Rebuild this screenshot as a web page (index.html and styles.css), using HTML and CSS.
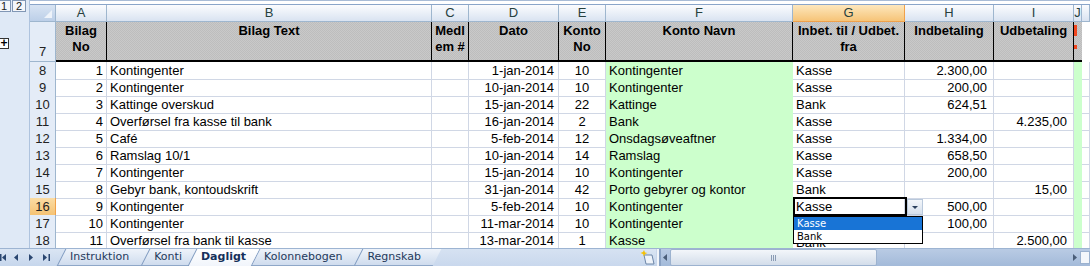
FILE: index.html
```html
<!DOCTYPE html>
<html lang="da">
<head>
    <meta charset="UTF-8">
    <title>Regnskab - Dagligt</title>
    <link rel="stylesheet" href="styles.css">
</head>
<body>
<div class="window">
    <div class="work">
        <div class="outline">
            <div class="levels"><span>1</span><span>2</span></div>
            <div class="expand">+</div>
        </div>

        <div class="sheet">
            <div class="edge"></div>

            <div class="r colhead">
                <div class="corner"></div>
                <div class="ch">A</div>
                <div class="ch">B</div>
                <div class="ch">C</div>
                <div class="ch">D</div>
                <div class="ch">E</div>
                <div class="ch">F</div>
                <div class="ch on">G</div>
                <div class="ch">H</div>
                <div class="ch">I</div>
                <div class="ch">J</div>
                <div class="ch"></div>
            </div>

            <div class="r headrow">
                <div class="rh tall">7</div>
                <div class="h">Bilag No</div>
                <div class="h">Bilag Text</div>
                <div class="h">Medl<br>em #</div>
                <div class="h">Dato</div>
                <div class="h">Konto No</div>
                <div class="h">Konto Navn</div>
                <div class="h">Inbet. til / Udbet. fra</div>
                <div class="h">Indbetaling</div>
                <div class="h">Udbetaling</div>
                <div class="h j"><span class="mark"></span><span class="dot"></span></div>
                <div class="h blank"></div>
            </div>

            <div class="r">
                <div class="rh">8</div>
                <div class="c num">1</div>
                <div class="c">Kontingenter</div>
                <div class="c"></div>
                <div class="c date">1-jan-2014</div>
                <div class="c ctr">10</div>
                <div class="c g">Kontingenter</div>
                <div class="c">Kasse</div>
                <div class="c amt">2.300,00</div>
                <div class="c amt"></div>
                <div class="c g"></div>
                <div class="c"></div>
            </div>
            <div class="r">
                <div class="rh">9</div>
                <div class="c num">2</div>
                <div class="c">Kontingenter</div>
                <div class="c"></div>
                <div class="c date">10-jan-2014</div>
                <div class="c ctr">10</div>
                <div class="c g">Kontingenter</div>
                <div class="c">Kasse</div>
                <div class="c amt">200,00</div>
                <div class="c amt"></div>
                <div class="c g"></div>
                <div class="c"></div>
            </div>
            <div class="r">
                <div class="rh">10</div>
                <div class="c num">3</div>
                <div class="c">Kattinge overskud</div>
                <div class="c"></div>
                <div class="c date">15-jan-2014</div>
                <div class="c ctr">22</div>
                <div class="c g">Kattinge</div>
                <div class="c">Bank</div>
                <div class="c amt">624,51</div>
                <div class="c amt"></div>
                <div class="c g"></div>
                <div class="c"></div>
            </div>
            <div class="r">
                <div class="rh">11</div>
                <div class="c num">4</div>
                <div class="c">Overførsel fra kasse til bank</div>
                <div class="c"></div>
                <div class="c date">16-jan-2014</div>
                <div class="c ctr">2</div>
                <div class="c g">Bank</div>
                <div class="c">Kasse</div>
                <div class="c amt"></div>
                <div class="c amt">4.235,00</div>
                <div class="c g"></div>
                <div class="c"></div>
            </div>
            <div class="r">
                <div class="rh">12</div>
                <div class="c num">5</div>
                <div class="c">Café</div>
                <div class="c"></div>
                <div class="c date">5-feb-2014</div>
                <div class="c ctr">12</div>
                <div class="c g">Onsdagsøveaftner</div>
                <div class="c">Kasse</div>
                <div class="c amt">1.334,00</div>
                <div class="c amt"></div>
                <div class="c g"></div>
                <div class="c"></div>
            </div>
            <div class="r">
                <div class="rh">13</div>
                <div class="c num">6</div>
                <div class="c">Ramslag 10/1</div>
                <div class="c"></div>
                <div class="c date">10-jan-2014</div>
                <div class="c ctr">14</div>
                <div class="c g">Ramslag</div>
                <div class="c">Kasse</div>
                <div class="c amt">658,50</div>
                <div class="c amt"></div>
                <div class="c g"></div>
                <div class="c"></div>
            </div>
            <div class="r">
                <div class="rh">14</div>
                <div class="c num">7</div>
                <div class="c">Kontingenter</div>
                <div class="c"></div>
                <div class="c date">15-jan-2014</div>
                <div class="c ctr">10</div>
                <div class="c g">Kontingenter</div>
                <div class="c">Kasse</div>
                <div class="c amt">200,00</div>
                <div class="c amt"></div>
                <div class="c g"></div>
                <div class="c"></div>
            </div>
            <div class="r">
                <div class="rh">15</div>
                <div class="c num">8</div>
                <div class="c">Gebyr bank, kontoudskrift</div>
                <div class="c"></div>
                <div class="c date">31-jan-2014</div>
                <div class="c ctr">42</div>
                <div class="c g">Porto gebyrer og kontor</div>
                <div class="c">Bank</div>
                <div class="c amt"></div>
                <div class="c amt">15,00</div>
                <div class="c g"></div>
                <div class="c"></div>
            </div>
            <div class="r">
                <div class="rh on">16</div>
                <div class="c num">9</div>
                <div class="c">Kontingenter</div>
                <div class="c"></div>
                <div class="c date">5-feb-2014</div>
                <div class="c ctr">10</div>
                <div class="c g">Kontingenter</div>
                <div class="c dd">Kasse
                    <div class="sel"></div>
                    <div class="ddbtn">
                        <svg width="16" height="16" viewBox="0 0 16 16"><path d="M5 7h6l-3 3z" fill="#2b3f5c"/></svg>
                    </div>
                    <div class="ddlist">
                        <div class="item hi">Kasse</div>
                        <div class="item">Bank</div>
                    </div>
                </div>
                <div class="c amt">500,00</div>
                <div class="c amt"></div>
                <div class="c g"></div>
                <div class="c"></div>
            </div>
            <div class="r">
                <div class="rh">17</div>
                <div class="c num">10</div>
                <div class="c">Kontingenter</div>
                <div class="c"></div>
                <div class="c date">11-mar-2014</div>
                <div class="c ctr">10</div>
                <div class="c g">Kontingenter</div>
                <div class="c"></div>
                <div class="c amt">100,00</div>
                <div class="c amt"></div>
                <div class="c g"></div>
                <div class="c"></div>
            </div>
            <div class="r">
                <div class="rh">18</div>
                <div class="c num">11</div>
                <div class="c">Overførsel fra bank til kasse</div>
                <div class="c"></div>
                <div class="c date">13-mar-2014</div>
                <div class="c ctr">1</div>
                <div class="c g">Kasse</div>
                <div class="c under">Bank</div>
                <div class="c amt"></div>
                <div class="c amt">2.500,00</div>
                <div class="c g"></div>
                <div class="c"></div>
            </div>
        </div>
    </div>

    <div class="tabbar">
        <div class="nav">
            <svg width="57" height="17" viewBox="0 0 57 17">
                <rect x="0" y="5" width="1.5" height="7" fill="#2a4670"/>
                <path d="M6 5L2 8.5L6 12z" fill="#2a4670"/>
                <path d="M18 5L14 8.5L18 12z" fill="#2a4670"/>
                <path d="M29 5L33 8.5L29 12z" fill="#2a4670"/>
                <path d="M43 5L47 8.5L43 12z" fill="#2a4670"/>
                <rect x="48.5" y="5" width="1.5" height="7" fill="#2a4670"/>
            </svg>
        </div>
        <div class="tabs">
            <span class="tab">Instruktion</span>
            <span class="tab">Konti</span>
            <span class="tab active">Dagligt</span>
            <span class="tab">Kolonnebogen</span>
            <span class="tab">Regnskab</span>
        </div>
        <div class="filler"></div>
        <div class="newsheet">
            <svg width="16" height="17" viewBox="0 0 16 17">
                <path d="M4 6h8l2 9H6z" fill="#eef3fa" stroke="#6d86a8"/>
                <path d="M4 1l1 2.5L7.5 4L5 5L4 7.5L3 5L0.5 4L3 3z" fill="#f5c000"/>
            </svg>
        </div>
        <div class="split"></div>
        <div class="hscroll">
            <div class="sbtn">
                <svg width="9" height="17" viewBox="0 0 9 17"><path d="M6 5L2 8.5L6 12z" fill="#4a5d78"/></svg>
            </div>
            <div class="thumb"><span class="grip"></span></div>
            <div class="track"></div>
            <div class="sbtn right">
                <svg width="12" height="17" viewBox="0 0 12 17"><path d="M5 5L9 8.5L5 12z" fill="#4a5d78"/></svg>
            </div>
            <div class="sizebox"></div>
        </div>
    </div>
</div>
</body>
</html>
```

FILE: styles.css
```css
body {
    margin: 0;
    font-family: "Liberation Sans", Arial, sans-serif;
    font-size: 13px;
    background-color: #fff;
    color: #000;
    overflow: hidden;
}
.window {
    width: 1090px;
    height: 266px;
    display: flex;
    flex-direction: column;
}
.work {
    display: flex;
    height: 248px;
    overflow: hidden;
}

/* outline (group) margin */
.outline {
    width: 30px;
    flex: none;
    background-color: #dfe9f6;
    border-right: 1px solid #aec3de;
    box-sizing: border-box;
}
.levels {
    display: flex;
    gap: 1px;
    margin-left: -3px;
}
.levels span {
    width: 12px;
    height: 10px;
    border: 1px solid #8197b5;
    background-color: #f4f6fa;
    font-size: 11px;
    line-height: 10px;
    text-align: center;
    color: #222;
}
.expand {
    width: 8px;
    height: 9px;
    margin-top: 26px;
    border: 1px solid #333;
    border-left: none;
    background-color: #fff;
    font-weight: bold;
    font-size: 12px;
    line-height: 9px;
    text-align: center;
}

.sheet {
    flex: 1;
    min-width: 0;
}
.edge {
    height: 5px;
    box-sizing: border-box;
    border-top: 1px solid #a9bcd6;
    border-bottom: 1px solid #8aa5c9;
}
.r {
    display: grid;
    grid-template-columns: 26px 51px 325px 37px 90px 47px 187px 112px 89px 80px 8px 1fr;
    height: 17px;
}
.r > div {
    box-sizing: border-box;
}

/* column letters */
.ch {
    background: linear-gradient(#fbfcfe, #d9e3f1);
    border-right: 1px solid #9eb6ce;
    border-bottom: 1px solid #9eb6ce;
    text-align: center;
    line-height: 16px;
    color: #27413e;
    overflow: hidden;
}
.ch.on {
    background: linear-gradient(#fde7bd, #f6c478);
    border-color: #f0a14a;
}
.corner {
    position: relative;
    background: linear-gradient(#d8e4f3, #bccfe8);
    border-right: 1px solid #9eb6ce;
    border-bottom: 1px solid #9eb6ce;
}
.corner::after {
    content: "";
    position: absolute;
    right: 3px;
    bottom: 3px;
    border-left: 8px solid transparent;
    border-bottom: 8px solid #eef3fa;
}

/* row numbers */
.rh {
    background-color: #e4ecf7;
    border-right: 1px solid #9eb6ce;
    border-bottom: 1px solid #9eb6ce;
    text-align: center;
    line-height: 16px;
    padding-top: 1px;
    color: #222;
}
.rh.on {
    background: linear-gradient(#fbdca4, #f5c374);
    border-color: #f0a14a;
}
.rh.tall {
    display: flex;
    align-items: flex-end;
    justify-content: center;
    padding-bottom: 1px;
}

/* header row 7 */
.headrow {
    height: 40px;
}
.h {
    background: repeating-conic-gradient(#bdbdbd 0% 25%, #c9c9c9 0% 50%) 0 0 / 2px 2px;
    border-right: 1px solid #000;
    border-bottom: 2px solid #000;
    font-weight: bold;
    text-align: center;
    line-height: 16px;
    padding-top: 1px;
    overflow: hidden;
}
.h.j {
    padding-top: 3px;
    border-right: none;
}
.h.j .mark {
    display: block;
    width: 3px;
    height: 11px;
    background-color: #f0461e;
}
.h.j .dot {
    display: block;
    width: 3px;
    height: 4px;
    margin-top: 9px;
    background-color: #f0461e;
}
.h.blank {
    background: #fff;
    border: none;
}

/* data cells */
.c {
    border-right: 1px solid #d0d7e5;
    border-bottom: 1px solid #d0d7e5;
    padding: 1px 3px 0;
    line-height: 16px;
    white-space: nowrap;
    overflow: hidden;
}
.num {
    text-align: right;
}
.date {
    text-align: right;
    padding-right: 4px;
}
.amt {
    text-align: right;
    padding-right: 6px;
}
.ctr {
    text-align: center;
}
.c.g {
    background-color: #ccffcc;
    border-color: #ccffcc;
}
/* only the lower part of this text shows below the open list */
.c.under {
    padding-top: 3px;
}

/* validation dropdown on G16 */
.dd {
    position: relative;
    overflow: visible;
}
.sel {
    position: absolute;
    left: 0;
    top: -1px;
    width: 114px;
    height: 19px;
    border: 2px solid #000;
    box-sizing: border-box;
}
.ddbtn {
    position: absolute;
    left: 114px;
    top: 1px;
    width: 16px;
    height: 16px;
    background: linear-gradient(#f3f6fa, #d5dfec);
    border: 1px solid #b9c8db;
    box-sizing: border-box;
}
.ddbtn svg {
    display: block;
    margin: -1px;
}
.ddlist {
    position: absolute;
    left: 0;
    top: 18px;
    width: 128px;
    border: 1px solid #000;
    background-color: #fff;
    font-family: "DejaVu Sans", sans-serif;
    font-size: 10px;
}
.item {
    height: 13px;
    line-height: 13px;
    padding-left: 3px;
}
.item.hi {
    background-color: #1874d6;
    color: #fff;
}

/* sheet tabs + scrollbar */
.tabbar {
    display: flex;
    height: 18px;
    box-sizing: border-box;
    border-top: 1px solid #9db4d2;
    background: linear-gradient(#dae5f3, #c6d6ec);
    font-family: "DejaVu Sans", sans-serif;
    font-size: 11px;
}
.nav {
    width: 57px;
    flex: none;
}
.nav svg {
    display: block;
}
.tabs {
    display: flex;
    position: relative;
    z-index: 0;
}
.tab {
    position: relative;
    padding: 0 12px 0 13px;
    line-height: 16px;
    color: #1e395b;
}
.tab::before {
    content: "";
    position: absolute;
    top: 0;
    bottom: 0;
    left: 4px;
    right: -4px;
    z-index: -1;
    transform: skewX(-27deg);
    background: linear-gradient(#eef3fa, #cfdcee);
    border-left: 1px solid #7f9abf;
    border-bottom: 1px solid #8ea7c8;
}
.tab.active {
    z-index: 1;
    margin-left: -6px;
    padding-right: 5px;
    font-weight: bold;
    color: #15305a;
}
.tab.active::before {
    background: linear-gradient(#ffffff, #f1f5fb);
    border-bottom: none;
}
.filler {
    flex: 1;
    background: linear-gradient(#d6e2f2, #c9d8ed);
}
.newsheet {
    width: 16px;
    flex: none;
}
.newsheet svg,
.sbtn svg {
    display: block;
}
.split {
    width: 5px;
    flex: none;
    background: linear-gradient(90deg, #c8d6ea 1px, #f2f5fa 1px, #f2f5fa 3px, #8aa2c4 3px);
}
.hscroll {
    width: 429px;
    flex: none;
    display: flex;
    background: linear-gradient(#b9cbe4, #a3bad9);
}
.sbtn {
    width: 9px;
    flex: none;
}
.sbtn.right {
    width: 12px;
}
.thumb {
    width: 207px;
    flex: none;
    display: flex;
    justify-content: center;
    align-items: center;
    box-sizing: border-box;
    border: 1px solid #9cb2cf;
    border-radius: 2px;
    background: linear-gradient(#f3f6fa, #d3ddea);
}
.grip {
    width: 5px;
    height: 6px;
    background: repeating-linear-gradient(90deg, #8a9bb4 0 1px, transparent 1px 2px);
}
.track {
    flex: 1;
}
.sizebox {
    width: 8px;
    flex: none;
    margin: 2px 0;
    border: 1px solid #9cb2cf;
    background-color: #f4f7fb;
}
```
